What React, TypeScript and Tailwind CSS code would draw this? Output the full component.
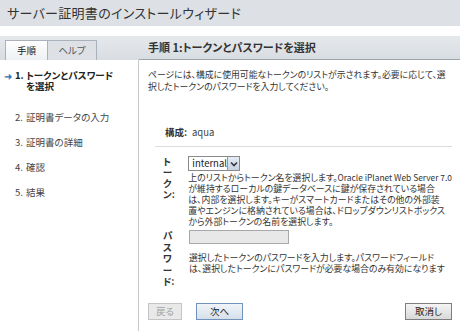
import React from "react";

const jp = "font-['Noto_Sans_CJK_JP','Noto_Sans',sans-serif] [font-feature-settings:'palt']";

function NavItem({ n, label, active, extra }: { n: string; label: React.ReactNode; active?: boolean; extra?: string }) {
  return (
    <div className={`flex items-start whitespace-nowrap ${extra ?? ""}`}>
      <span className={`w-[11px] text-[10px] leading-[11px] text-[#2f6db5] ${active ? "" : "invisible"}`}>➜</span>
      <span className={`text-[9.5px] leading-[11px] w-[11px] ${active ? "font-bold text-[#222]" : "text-[#444]"}`}>{n}</span>
      <span className={`text-[9.5px] leading-[11px] ${active ? "font-bold text-[#222]" : "text-[#444]"}`}>{label}</span>
    </div>
  );
}

export default function App() {
  return (
    <div className={`w-[460px] h-[331px] bg-white overflow-hidden text-[#333] ${jp}`}>
      <div className="h-[26px] bg-[#dde1e5] flex items-center pl-[7px] text-[13px] text-[#333] tracking-[0.3px]">
        サーバー証明書のインストールウィザード
      </div>
      <div className="h-[10px]" />
      <div className="flex h-[295px]">
        <div className="w-[139px] shrink-0 flex flex-col">
          <div className="h-[24px] bg-gradient-to-b from-[#e6e9ec] to-[#d8dde1] flex items-end pl-[5px]">
            <div className="h-[20px] w-[43px] border border-b-0 border-[#a9b2ba] bg-gradient-to-b from-[#ffffff] to-[#eef0f2] flex items-center justify-center text-[9.5px] text-[#222]">
              手順
            </div>
            <div className="h-[20px] w-[49px] border border-l-0 border-b-0 border-[#a9b2ba] bg-[#dde1e5] flex items-center justify-center text-[9.5px] text-[#555]">
              ヘルプ
            </div>
          </div>
          <div className="flex-1 border-r border-[#c9c9c9] pl-[4px] pt-[10px] flex flex-col gap-[14px]">
            <NavItem
              n="1."
              active
              label={
                <>
                  トークンとパスワード
                  <br />
                  を選択
                </>
              }
            />
            <NavItem n="2." label="証明書データの入力" extra="mt-[6px]" />
            <NavItem n="3." label="証明書の詳細" />
            <NavItem n="4." label="確認" />
            <NavItem n="5." label="結果" />
          </div>
        </div>
        <div className="flex-1 min-w-0 flex flex-col">
          <div className="h-[24px] bg-gradient-to-b from-[#e6e9ec] to-[#d8dde1] border-b border-[#9ca4ac] flex items-center pl-[9px] text-[11px] font-bold text-[#333] whitespace-nowrap">
            手順 1:トークンとパスワードを選択
          </div>
          <div className="flex-1 flex flex-col pl-[9px] pr-[8px]">
            <p className="mt-[9px] text-[8.85px] leading-[12px] text-[#333] whitespace-nowrap">
              ページには、構成に使用可能なトークンのリストが示されます。必要に応じて、選
              <br />
              択したトークンのパスワードを入力してください。
            </p>
            <div className="mt-[33px] pl-[17px] flex items-center text-[9.5px] leading-[12px]">
              <span className="font-bold w-[27px]">構成:</span>
              <span className="text-[#444]">aqua</span>
            </div>
            <div className="mt-[8px] ml-[7px] h-px bg-[#dcdcdc]" />
            <div className="mt-[9px] pl-[15px] flex">
              <div className="w-[26px] text-[9.5px] leading-[11px] font-bold text-[#333]">
                ト<br />ー<br />ク<br />ン:
              </div>
              <div className="flex flex-col">
                <div className="flex h-[15px] w-[52px] border border-[#8a8a8a] bg-white">
                  <span className="flex-1 text-[9.5px] leading-[13px] pl-[3px] text-[#222]">internal</span>
                  <span className="w-[12px] bg-gradient-to-b from-[#e4ebf3] to-[#c7d3e0] border-l border-[#8a9aaa] flex items-center justify-center">
                    <svg width="8" height="6" viewBox="0 0 8 6">
                      <path d="M1 1.5 L4 4.5 L7 1.5" stroke="#334" strokeWidth="1.6" fill="none" />
                    </svg>
                  </span>
                </div>
                <p className="mt-[1px] text-[8.9px] leading-[11px] text-[#333] whitespace-nowrap">
                  上のリストからトークン名を選択します。<span className="text-[8.4px]">Oracle iPlanet Web Server 7.0</span>
                  <br />
                  が維持するローカルの鍵データベースに鍵が保存されている場合
                  <br />
                  は、内部を選択します。キーがスマートカードまたはその他の外部装
                  <br />
                  置やエンジンに格納されている場合は、ドロップダウンリストボックス
                  <br />
                  から外部トークンの名前を選択します。
                </p>
              </div>
            </div>
            <div className="mt-[3px] pl-[15px] flex">
              <div className="w-[26px] text-[9.5px] leading-[11.5px] font-bold text-[#333]">
                パ<br />ス<br />ワ<br />ー<br />ド:
              </div>
              <div className="flex flex-col">
                <div className="h-[14px] w-[100px] border border-[#a8a8a8] bg-[#e8e8e8]" />
                <p className="mt-[8px] text-[8.9px] leading-[11px] text-[#333] whitespace-nowrap">
                  選択したトークンのパスワードを入力します。パスワードフィールド
                  <br />
                  は、選択したトークンにパスワードが必要な場合のみ有効になります
                </p>
              </div>
            </div>
            <div className="mt-auto mb-[11px] flex items-center">
              <button className="h-[17px] w-[34px] border border-[#c4c4c4] bg-[#e9e9e9] text-[9.5px] text-[#a0a0a0] flex items-center justify-center">
                戻る
              </button>
              <button className="ml-[14px] h-[17px] w-[47px] border border-[#6f93bb] bg-gradient-to-b from-[#f0f4f8] to-[#d6e0ea] text-[9.5px] text-[#222] flex items-center justify-center">
                次へ
              </button>
              <button className="ml-auto h-[17px] w-[47px] border border-[#7e7e7e] bg-gradient-to-b from-[#f4f4f4] to-[#d9d9d9] text-[9.5px] text-[#222] flex items-center justify-center">
                取消し
              </button>
            </div>
          </div>
        </div>
      </div>
    </div>
  );
}
